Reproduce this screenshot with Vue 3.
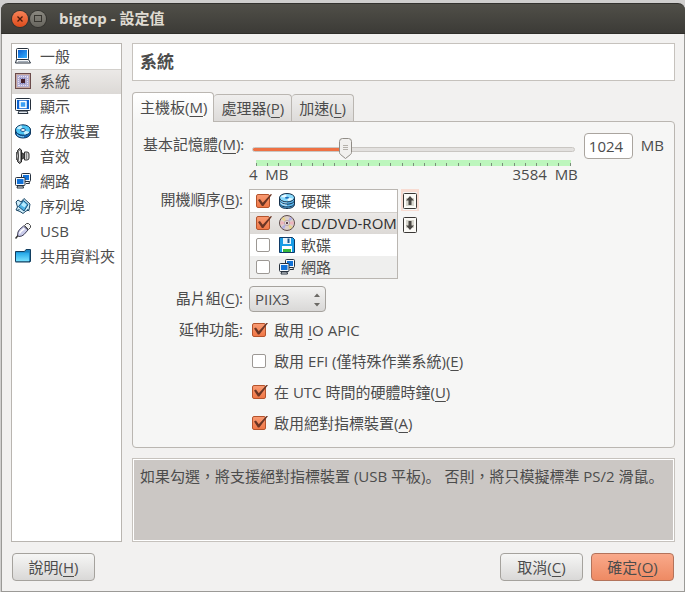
<script setup>
import { ref, computed } from 'vue'

const sections = [
  { icon: 'laptop', name: '一般' },
  { icon: 'chip', name: '系統' },
  { icon: 'monitor', name: '顯示' },
  { icon: 'disc', name: '存放裝置' },
  { icon: 'speaker', name: '音效' },
  { icon: 'network', name: '網路' },
  { icon: 'serial', name: '序列埠' },
  { icon: 'usb', name: 'USB' },
  { icon: 'folder', name: '共用資料夾' },
]
const section = ref(1)

const tabs = [
  { text: '主機板', key: 'M' },
  { text: '處理器', key: 'P' },
  { text: '加速', key: 'L' },
]
const tab = ref(0)

const minMemory = 4
const maxMemory = 3584
const memory = ref(1024)
const fraction = computed(() => (memory.value - minMemory) / (maxMemory - minMemory))

const boot = ref([
  { icon: 'harddisk', name: '硬碟', on: true },
  { icon: 'cd', name: 'CD/DVD-ROM', on: true },
  { icon: 'floppy', name: '軟碟', on: false },
  { icon: 'network', name: '網路', on: false },
])
const bootSelected = ref(1)
function move(step) {
  const from = bootSelected.value
  const to = from + step
  if (to < 0 || to >= boot.value.length) return
  const [item] = boot.value.splice(from, 1)
  boot.value.splice(to, 0, item)
  bootSelected.value = to
}

const chipset = ref('PIIX3')
const features = ref([
  { before: '啟用 ', key: 'I', after: 'O APIC', on: true },
  { before: '啟用 EFI (僅特殊作業系統)(', key: 'E', after: ')', on: false },
  { before: '在 UTC 時間的硬體時鐘(', key: 'U', after: ')', on: true },
  { before: '啟用絕對指標裝置(', key: 'A', after: ')', on: true },
])
</script>

<template>
  <div class="window">
    <svg class="defs" aria-hidden="true">
      <defs>
        <linearGradient id="blue" x1="0" y1="0" x2="1" y2="1">
          <stop offset="0" stop-color="#0a5fd0" />
          <stop offset="1" stop-color="#35b0ff" />
        </linearGradient>
        <linearGradient id="sky" x1="0" y1="0" x2="0" y2="1">
          <stop offset="0" stop-color="#22a6e8" />
          <stop offset="1" stop-color="#7be4ff" />
        </linearGradient>
        <symbol id="laptop" viewBox="0 0 16 16">
          <rect x="1.5" y=".5" width="12" height="11" rx="1" fill="#fff" stroke="#26303c" />
          <rect x="3" y="2" width="9" height="8" fill="url(#blue)" />
          <path d="M1.500 11.500h12l2 3.500H.5z" fill="#f4f6f8" stroke="#26303c" />
          <path d="M3 13.500h10" stroke="#a4adb8" />
        </symbol>
        <symbol id="chip" viewBox="0 0 16 16">
          <rect x=".5" y=".5" width="15" height="15" fill="#c9a9a0" stroke="#6b4b4b" />
          <rect x="2" y="2" width="12" height="12" fill="#b3aed2" />
          <path d="M4 3.500h9M4 12.500h9M3.500 4v9M12.500 4v9" stroke="#e6e0f4" stroke-dasharray="1 1" />
          <path d="M5 5.500h6M5 10.500h6" stroke="#7379bd" stroke-dasharray="1 1" />
          <rect x="6" y="6" width="4" height="4" fill="#46202a" />
        </symbol>
        <symbol id="monitor" viewBox="0 0 16 16">
          <rect x=".5" y=".5" width="15" height="12" rx="1" fill="#f7fbff" stroke="#26303c" />
          <rect x="2" y="2" width="12" height="9" fill="#0c62d0" />
          <rect x="5" y="3.500" width="6" height="6" fill="#3b9ff5" stroke="#fff" stroke-width="1.500" />
          <path d="M4 13h8l1 2.500H3z" fill="#dfe5ec" stroke="#26303c" />
        </symbol>
        <symbol id="disc" viewBox="0 0 16 16">
          <path d="M.5 7v3c0 3 3.500 5 7.500 5s7.500-2 7.500-5V6z" fill="#1268b8" stroke="#10375e" />
          <ellipse cx="8" cy="7" rx="7.500" ry="5.200" fill="#4bc3f4" stroke="#10375e" />
          <path d="M8 7L1.500 5.500C2.500 3.800 4.500 2.700 6.500 2.400zM8 7l6.500 2c-1 1.500-3 2.400-5 2.700z" fill="#c5f1ff" />
          <ellipse cx="8" cy="7" rx="2.400" ry="1.500" fill="#fff" stroke="#1b548b" />
          <path d="M2 11.500c2 2 5 2.500 7 2.300" stroke="#8edbff" fill="none" />
        </symbol>
        <symbol id="speaker" viewBox="0 0 16 16">
          <path d="M1.500 4v8" stroke="#555" />
          <path d="M2.500 2.500l2-2 2 1.500v12l-2 1.500-2-2q1.500-5.500 0-11z" fill="#8c8c8c" stroke="#222" />
          <path d="M4.500 3v10" stroke="#f2f2f2" />
          <path d="M6.500 4.500l3 2v3l-3 2z" fill="#555" stroke="#222" />
          <path d="M9.500 4h2.500q2 0 2 2v4q0 2-2 2H9.500z" fill="#d0d0d0" stroke="#333" />
          <path d="M11.500 5v6" stroke="#888" />
        </symbol>
        <symbol id="network" viewBox="0 0 16 16">
          <rect x="6.500" y=".5" width="9" height="8" rx="1" fill="#f4f8fc" stroke="#26303c" />
          <rect x="8" y="2" width="6" height="5" fill="#1272d8" />
          <path d="M11 10.500h3.500l-.5-2" stroke="#26303c" fill="none" />
          <rect x=".5" y="4.500" width="9.500" height="8" rx="1" fill="#f4f8fc" stroke="#26303c" />
          <rect x="2" y="6" width="6.500" height="5" fill="#1272d8" />
          <path d="M2.500 13h5.500l.5 2H2z" fill="#eef2f6" stroke="#26303c" />
        </symbol>
        <symbol id="serial" viewBox="0 0 16 16">
          <path d="M1 4l2-2 3 2 3-3.500 6 5.500-1 6-3 1-3 2.500-3-2L1 12l1.500-3z" fill="#cfeefa" stroke="#1c4766" />
          <path d="M8.500 2.500l4.500 4-4 6.500-5.500-4.500z" fill="#4fb2e4" stroke="#164d78" />
          <path d="M8.500 4l3 2.800-2 2.700L6 7z" fill="#b9ecff" />
          <path d="M2 12.500l2.500-1M12 11.500l2.500 1.500" stroke="#1c4766" />
        </symbol>
        <symbol id="usb" viewBox="0 0 16 16">
          <path d="M9.500 2.500l2-2h2l2 2v2l-2 2z" fill="#f5f5f5" stroke="#444" />
          <path d="M2.500 12.500q0-4 2-6l4-3.500 4.500 4-4 4.500q-2 2-5 2z" fill="#c8caea" stroke="#3c3c55" />
          <path d="M4.500 10.500q1-2.500 5-5" stroke="#fff" stroke-width="1.500" fill="none" />
          <path d="M3 12.500l-2.500 3" stroke="#333" stroke-width="1.500" />
        </symbol>
        <symbol id="folder" viewBox="0 0 16 16">
          <path d="M.5 13.500v-10h9l1.500-2h4.500v12z" fill="#1d86c2" stroke="#123e60" />
          <path d="M1 4.500h13v9H1z" fill="url(#sky)" />
          <path d="M.5 14h14.500" stroke="#123e60" />
        </symbol>
        <symbol id="harddisk" viewBox="0 0 16 16">
          <path d="M.5 4.500v7c0 2.500 3.500 4 7.500 4s7.500-1.500 7.500-4v-7z" fill="#5cb8f0" stroke="#152f4a" />
          <path d="M.5 7.500c0 2 3.500 3.700 7.500 3.700s7.500-1.700 7.500-3.700M.5 10.500c0 2 3.500 3.500 7.500 3.500s7.500-1.500 7.500-3.500" fill="none" stroke="#152f4a" />
          <path d="M1.500 9.500c1.500 2 4 2.700 6.500 2.700M1.500 6.700c1.500 2 4 2.700 6.500 2.700" fill="none" stroke="#e5f8ff" />
          <ellipse cx="8" cy="4.700" rx="7.500" ry="4.200" fill="#8bdcff" stroke="#152f4a" />
          <path d="M8 4.700L2 4c1-1.500 3-2.300 5-2.500zM8 4.700l6 .8c-1 1.400-3 2.200-5 2.400z" fill="#eafaff" />
          <ellipse cx="8" cy="4.700" rx="2" ry="1" fill="#1a6cb8" />
        </symbol>
        <symbol id="cd" viewBox="0 0 16 16">
          <circle cx="8" cy="8" r="7.500" fill="#dccfc9" stroke="#5c4a4a" />
          <path d="M8 8L2.500 4 5 1.700zM8 8l5.500 4-2.500 2.300z" fill="#e8d488" />
          <path d="M8 8l3-6.300L13.500 4zM8 8l-3 6.300L2.500 12z" fill="#b3b0e4" />
          <path d="M8 8L1.500 6v4zM8 8l6.500-2v4z" fill="#edb3bd" />
          <circle cx="8" cy="8" r="2.600" fill="#f3ebe8" stroke="#b8a4a8" />
          <circle cx="8" cy="8" r="1.200" fill="#583f48" />
        </symbol>
        <symbol id="floppy" viewBox="0 0 16 16">
          <path d="M.5.5h13l2 2v13H.5z" fill="#199de6" stroke="#103a66" />
          <rect x="4" y="1" width="8" height="6" fill="#e8f2fa" />
          <rect x="8.500" y="1.500" width="2" height="4.500" fill="#16568e" />
          <rect x="3" y="9" width="10" height="6" fill="#fff" />
          <rect x="4" y="12" width="8" height="3" fill="#35b83c" />
        </symbol>
      </defs>
    </svg>

    <header class="titlebar">
      <button class="round close" aria-label="Close">
        <svg viewBox="0 0 16 16"><path d="M5.500 5.500l5 5M10.500 5.500l-5 5" stroke="#4a1c0c" stroke-width="1.300" /></svg>
      </button>
      <button class="round" aria-label="Maximize">
        <svg viewBox="0 0 16 16"><rect x="4.500" y="4.500" width="7" height="6" fill="none" stroke="#37352f" /></svg>
      </button>
      <h1>bigtop - 設定值</h1>
    </header>

    <div class="body">
      <nav class="sidebar">
        <button
          v-for="(s, i) in sections"
          :key="s.name"
          class="section"
          :class="{ selected: i === section }"
          @click="section = i"
        >
          <svg class="icon"><use :href="'#' + s.icon" /></svg>
          <span>{{ s.name }}</span>
        </button>
      </nav>

      <main class="main">
        <h2 class="heading">{{ sections[section].name }}</h2>

        <div class="tabbed">
          <div class="tabs" role="tablist">
            <button
              v-for="(t, i) in tabs"
              :key="t.key"
              class="tab"
              :class="{ active: i === tab }"
              role="tab"
              :aria-selected="i === tab"
              @click="tab = i"
            >{{ t.text }}(<u>{{ t.key }}</u>)</button>
          </div>

          <div class="panel" role="tabpanel">
            <label class="label" for="memory">基本記憶體(<u>M</u>):</label>
            <div class="memory">
              <div class="scale">
                <div class="slider" :style="{ '--fraction': fraction }">
                  <input id="memory" v-model.number="memory" type="range" :min="minMemory" :max="maxMemory" />
                  <div class="rail">
                    <svg class="thumb" viewBox="0 0 13 21">
                      <path d="M3.500.5h6q3 0 3 3v11q0 1-1 2l-5 4-5-4q-1-1-1-2v-11q0-3 3-3z" fill="#f1f0ee" stroke="#908c86" />
                      <path d="M4 7.500h5M4 9.500h5M4 11.500h5" stroke="#b5b1ab" />
                    </svg>
                  </div>
                </div>
                <div class="ticks"><i v-for="n in 29" :key="n"></i></div>
                <div class="limits"><span>4&nbsp; MB</span><span>3584&nbsp; MB</span></div>
              </div>
              <input v-model.number="memory" class="amount" type="text" aria-label="基本記憶體" />
              <span class="unit">MB</span>
            </div>

            <span class="label boot-label">開機順序(<u>B</u>):</span>
            <div class="boot">
              <ul class="boot-list">
                <li
                  v-for="(b, i) in boot"
                  :key="b.name"
                  :class="{ selected: i === bootSelected }"
                  @click="bootSelected = i"
                >
                  <input :id="'boot-' + b.icon" v-model="b.on" type="checkbox" class="check" />
                  <svg class="icon"><use :href="'#' + b.icon" /></svg>
                  <label :for="'boot-' + b.icon">{{ b.name }}</label>
                </li>
              </ul>
              <div class="movers">
                <button class="mover hot" aria-label="Move up" @click="move(-1)">
                  <svg viewBox="0 0 14 16">
                    <rect x=".5" y=".5" width="13" height="15" rx="1" fill="#fbfaf6" stroke="#3a3835" />
                    <path d="M3 5h8v8H3z" fill="#d9d8cf" />
                    <path d="M7 3l4 4.500H8.500V12h-3V7.500H3z" fill="#4a4743" />
                  </svg>
                </button>
                <button class="mover" aria-label="Move down" @click="move(1)">
                  <svg viewBox="0 0 14 16">
                    <rect x=".5" y=".5" width="13" height="15" rx="1" fill="#fbfaf6" stroke="#3a3835" />
                    <path d="M3 3h8v8H3z" fill="#d9d8cf" />
                    <path d="M7 13L3 8.500h2.500V4h3v4.500H11z" fill="#4a4743" />
                  </svg>
                </button>
              </div>
            </div>

            <label class="label" for="chipset">晶片組(<u>C</u>):</label>
            <div class="combo">
              <select id="chipset" v-model="chipset">
                <option>PIIX3</option>
                <option>ICH9</option>
              </select>
              <svg viewBox="0 0 8 14"><path d="M1 4l3-3.500L7 4zM1 10h6l-3 3.500z" fill="#6b6965" /></svg>
            </div>

            <span class="label feature-label">延伸功能:</span>
            <div class="features">
              <label v-for="f in features" :key="f.key" class="feature">
                <input v-model="f.on" type="checkbox" class="check" />
                <span>{{ f.before }}<u>{{ f.key }}</u>{{ f.after }}</span>
              </label>
            </div>
          </div>
        </div>

        <p class="hint">如果勾選，將支援絕對指標裝置 (USB 平板)<span class="stop">。</span> 否則，將只模擬標準 PS/2 滑鼠<span class="stop">。</span></p>
      </main>
    </div>

    <footer class="actions">
      <button class="action">說明(<u>H</u>)</button>
      <span class="spacer"></span>
      <button class="action">取消(<u>C</u>)</button>
      <button class="action primary">確定(<u>O</u>)</button>
    </footer>
  </div>
</template>

<style>
body {
  margin: 0;
  background: #d0cfce;
}
</style>

<style scoped>
* {
  box-sizing: border-box;
}
.window {
  display: flex;
  flex-direction: column;
  min-height: calc(100vh - 3px);
  margin: 3px 0 0 1px;
  padding-bottom: 10px;
  background: #f2f1f0;
  border: 1px solid #9b9a97;
  border-top: 0;
  border-radius: 7px 7px 0 0;
  color: #4c4c4c;
  font: 15px/20px "Open Sans", "Noto Sans CJK TC", sans-serif;
}
button,
input,
select {
  margin: 0;
  color: inherit;
  font: inherit;
}
button {
  padding: 0;
  border: 0;
  background: none;
}
u {
  text-decoration-thickness: 1px;
  text-underline-offset: 3px;
}
.defs {
  position: absolute;
  width: 0;
  height: 0;
}
.icon {
  flex: none;
  width: 16px;
  height: 16px;
}

.titlebar {
  display: flex;
  align-items: center;
  gap: 2px;
  height: 31px;
  margin: 0 -1px;
  padding: 1px 11px 0;
  background: linear-gradient(#504f48, #3c3b37);
  border-top: 1px solid #33322e;
  border-bottom: 1px solid #2f2e2a;
  border-radius: 7px 7px 0 0;
}
.titlebar h1 {
  margin: 0 0 3px 11px;
  color: #dfdbd2;
  font-size: 15px;
  line-height: 20px;
}
.round {
  width: 16px;
  height: 16px;
  border-radius: 50%;
  background: linear-gradient(#8a8880, #67655e);
  box-shadow: 0 0 0 1px #33322e;
}
.round svg {
  display: block;
}
.close {
  background: linear-gradient(#f78257, #de4c1c);
}

.body {
  display: flex;
  flex: 1;
  gap: 10px;
  padding: 9px 9px 11px;
}
.sidebar {
  display: flex;
  flex: none;
  flex-direction: column;
  width: 111px;
  background: #fff;
  border: 1px solid #b9b5b0;
}
.section {
  display: flex;
  align-items: center;
  gap: 9px;
  height: 25px;
  padding: 0 3px 2px;
  white-space: nowrap;
}
.selected {
  background: linear-gradient(#eceae8, #dcd9d6);
  box-shadow: inset 0 1px #d2cfcb;
}
.main {
  display: flex;
  flex: 1;
  flex-direction: column;
  min-width: 0;
}
.heading {
  margin: 0 0 11px;
  padding: 8px 7px;
  background: #fff;
  border: 1px solid #c6c2bd;
  font-size: 17px;
  line-height: 20px;
}

.tabs {
  display: flex;
  align-items: flex-end;
  padding-right: 20px;
}
.tab {
  height: 27px;
  padding: 0 7px;
  background: linear-gradient(#efeeed, #dddbd9);
  border: 1px solid #bab6b1;
  border-left: 0;
  border-bottom: 0;
  border-radius: 4px 4px 0 0;
}
.tab.active {
  position: relative;
  z-index: 1;
  height: 30px;
  margin-bottom: -1px;
  padding: 0 6px 2px 7px;
  background: linear-gradient(#fff, #f6f6f5);
  border-left: 1px solid #bab6b1;
}
.panel {
  display: grid;
  grid-template-columns: 100px 1fr;
  column-gap: 6px;
  padding: 10px 10px 9px;
  background: #f6f6f5;
  border: 1px solid #bab6b1;
  border-radius: 0 4px 4px 4px;
}
.label {
  padding-top: 2px;
  text-align: right;
  white-space: nowrap;
}
.memory {
  display: flex;
  align-items: flex-start;
  height: 57px;
}
.scale {
  flex: 1;
}
.slider {
  position: relative;
  height: 28px;
  margin: 0 1px;
}
.slider input {
  display: block;
  width: 100%;
  height: 34px;
  appearance: none;
  background: none;
}
.slider input::-webkit-slider-runnable-track {
  height: 5px;
  margin: 0 2px;
  border-radius: 3px;
  border: 1px solid #c9c6c2;
  background:
    linear-gradient(90deg, #ee7144 calc(var(--fraction) * 100%), #e3e1df 0);
}
.slider input::-webkit-slider-thumb {
  width: 13px;
  height: 5px;
  appearance: none;
  background: none;
}
.rail {
  position: absolute;
  inset: 6px 13px 0 0;
  pointer-events: none;
}
.thumb {
  position: absolute;
  left: calc(var(--fraction) * 100%);
  width: 13px;
  height: 21px;
}
.ticks {
  display: flex;
  align-items: flex-end;
  justify-content: space-between;
  height: 6px;
  margin: 0 7px;
  background: #bdf6bd;
}
.ticks i {
  width: 1px;
  height: 3px;
  background: #7b8f7b;
}
.limits {
  display: flex;
  justify-content: space-between;
  line-height: 17px;
}
.amount {
  width: 49px;
  height: 26px;
  margin: 1px 8px 0 6px;
  padding: 0 4px;
  background: #fff;
  border: 1px solid #aaa59f;
  border-radius: 4px;
}
.unit {
  padding-top: 3px;
}
.boot-label {
  padding-top: 0;
}
.boot {
  display: flex;
  gap: 5px;
  margin-bottom: 7px;
}
.boot-list {
  width: 149px;
  margin: 0;
  padding: 0;
  background: #fff;
  border: 1px solid #bab6b1;
  list-style: none;
}
.boot-list li {
  display: flex;
  align-items: center;
  height: 22px;
  padding-left: 6px;
  white-space: nowrap;
}
.boot-list .icon {
  margin: 0 6px 0 9px;
}
.boot-list li:last-child {
  background: #efefee;
}
.boot-list .selected {
  color: #2f2f2f;
}
.movers {
  display: flex;
  flex-direction: column;
  gap: 6px;
  padding-top: 3px;
}
.mover {
  width: 14px;
  height: 18px;
}
.mover svg {
  display: block;
  width: 14px;
  height: 16px;
}
.hot {
  box-shadow: 0 -1px 0 2px #f8dcd2;
}
.combo {
  position: relative;
  width: 78px;
  height: 28px;
}
.combo select {
  width: 77px;
  height: 26px;
  padding: 0 5px;
  appearance: none;
  background: linear-gradient(#f3f3f2, #d9d8d7);
  border: 1px solid #a5a29d;
  border-radius: 4px;
}
.combo svg {
  position: absolute;
  top: 7px;
  right: 6px;
  width: 8px;
  height: 14px;
  pointer-events: none;
}
.features {
  display: flex;
  flex-direction: column;
}
.feature {
  display: flex;
  align-items: center;
  gap: 8px;
  height: 31px;
  padding-left: 3px;
  white-space: nowrap;
}
.feature-label {
  padding-top: 5px;
}
.check {
  position: relative;
  flex: none;
  width: 14px;
  height: 14px;
  appearance: none;
  background: #fff;
  border: 1px solid #9c9894;
  border-radius: 2px;
}
.check:checked {
  background: linear-gradient(#f99a72, #f07746);
  border-color: #b4532c;
}
.check:checked::before {
  content: "";
  position: absolute;
  top: -1px;
  left: 1px;
  width: 14px;
  height: 12px;
  background: #6b3524;
  clip-path: polygon(0 50%, 14% 42%, 34% 72%, 92% 0, 100% 5%, 38% 100%, 28% 100%);
}
.hint {
  flex: 1;
  margin: 10px 0 0;
  padding: 7px;
  background: #cbc7c4;
  border: 1px solid #c6c2bd;
  box-shadow: inset 0 0 0 1px #fff;
  white-space: nowrap;
}
.stop {
  font-family: "Noto Sans CJK SC", sans-serif;
}

.actions {
  display: flex;
  gap: 8px;
  padding: 0 10px;
}
.spacer {
  flex: 1;
}
.action {
  width: 83px;
  height: 28px;
  background: linear-gradient(#f6f6f5, #d9d8d7);
  border: 1px solid #a5a29d;
  border-radius: 4px;
}
.primary {
  background: linear-gradient(#f9a98a, #ee8a63);
  border-color: #b3735b;
}
</style>
